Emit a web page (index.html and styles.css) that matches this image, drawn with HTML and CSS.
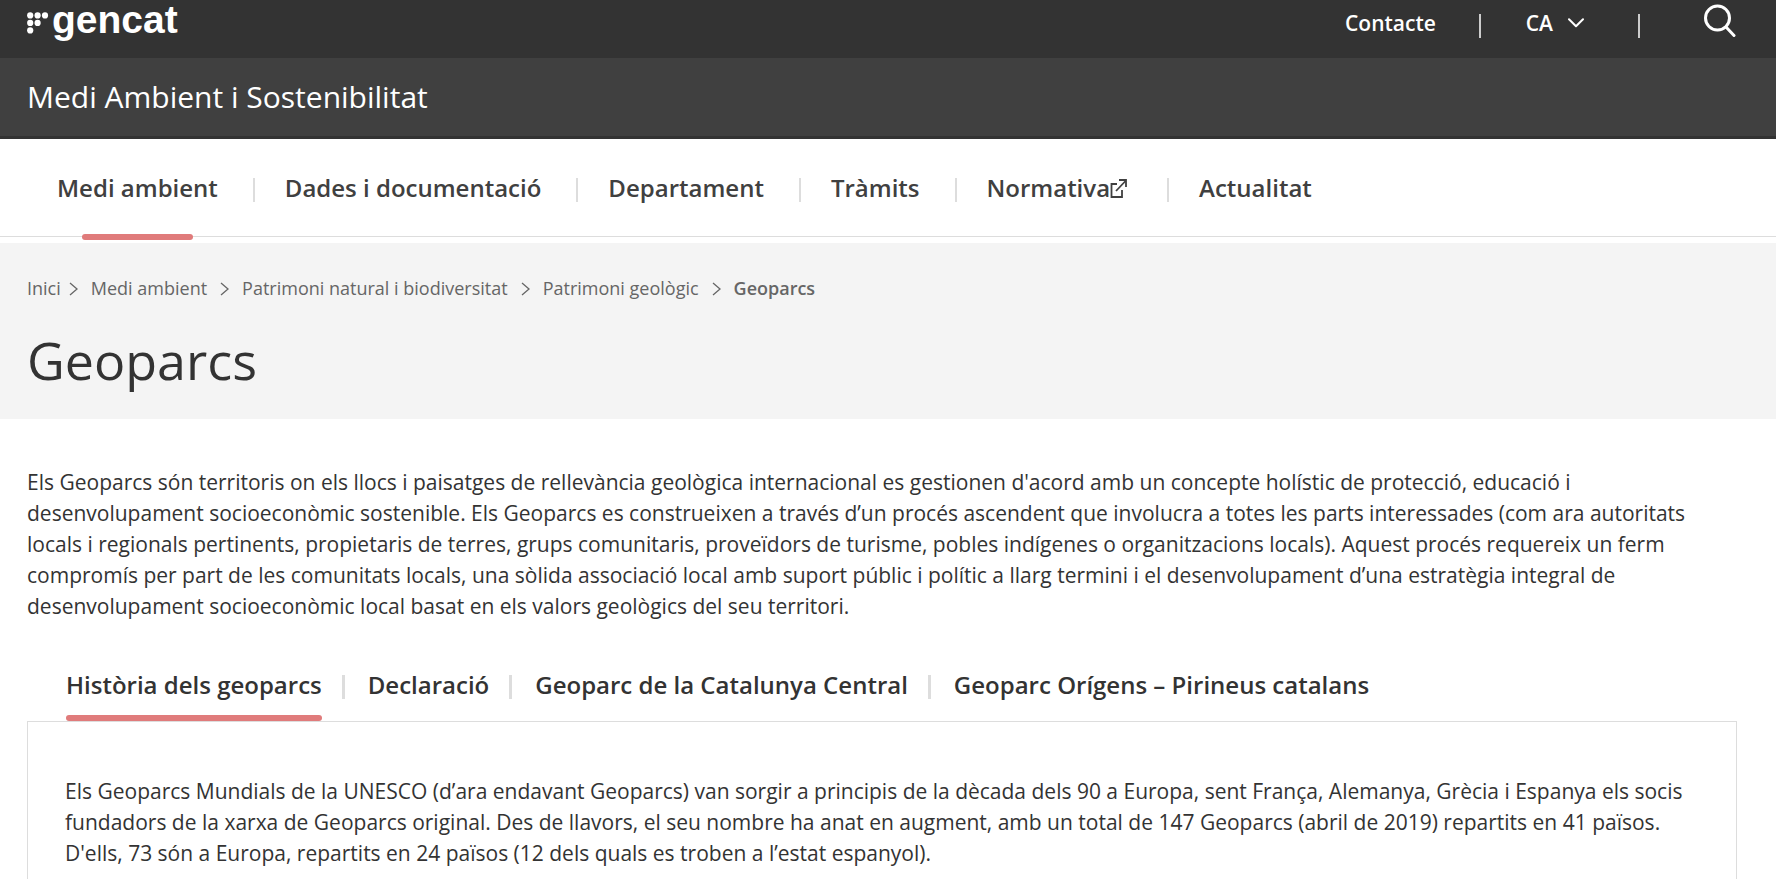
FILE: index.html
```html
<!DOCTYPE html>
<html lang="ca">
<head>
    <meta charset="UTF-8">
    <meta name="viewport" content="width=device-width, initial-scale=1.0">
    <title>Geoparcs. Medi Ambient i Sostenibilitat</title>
    <link rel="stylesheet" href="styles.css">
</head>
<body>
    <!-- header -->
    <header>
        <div class="topbar">
            <a class="logo" href="#">
                <svg width="22" height="22" viewBox="0 0 22 22" fill="#fff" aria-hidden="true">
                    <circle cx="3.2" cy="3.4" r="3.1"/>
                    <circle cx="10.6" cy="3.4" r="3.1"/>
                    <circle cx="18" cy="3.4" r="3.1"/>
                    <circle cx="3.2" cy="10.9" r="3.1"/>
                    <circle cx="10.6" cy="10.9" r="3.1"/>
                    <circle cx="3.2" cy="18.4" r="3.1"/>
                </svg>
                <span>gencat</span>
            </a>
            <div class="tools">
                <a class="contact" href="#">Contacte</a>
                <button class="lang" type="button">CA
                    <svg width="16" height="10" viewBox="0 0 16 10" fill="none" stroke="#fff" stroke-width="2" stroke-linecap="round" stroke-linejoin="round" aria-hidden="true">
                        <path d="M1 1.2 L8 8.3 L15 1.2"/>
                    </svg>
                </button>
                <button class="search" type="button" aria-label="Cerca">
                    <svg width="32" height="38" viewBox="0 0 32 38" fill="none" stroke="#fff" stroke-width="3" stroke-linecap="round" aria-hidden="true">
                        <circle cx="13.5" cy="14" r="12"/>
                        <path d="M22 23 L30 31.5"/>
                    </svg>
                </button>
            </div>
        </div>
        <div class="department">
            <a href="#">Medi Ambient i Sostenibilitat</a>
        </div>
    </header>

    <!-- main menu -->
    <nav class="menu">
        <a class="active" href="#">Medi ambient</a>
        <a href="#">Dades i documentació</a>
        <a href="#">Departament</a>
        <a href="#">Tràmits</a>
        <a class="external" href="#">Normativa<svg width="17" height="19" viewBox="0 0 17 19" fill="none" stroke="#404040" stroke-width="1.8" aria-hidden="true">
                <path d="M7 5 H1.5 V18 H12 V11"/>
                <path d="M6 12 L15.5 2"/>
                <path d="M9 1 H16 V8"/>
            </svg></a>
        <a href="#">Actualitat</a>
    </nav>

    <!-- page title -->
    <div class="page-head">
        <ol class="breadcrumb">
            <li><a href="#">Inici</a></li>
            <li><svg width="9" height="14" viewBox="0 0 9 14" aria-hidden="true"><path d="M1 1 L8 7 L1 13"/></svg><a href="#">Medi ambient</a></li>
            <li><svg width="9" height="14" viewBox="0 0 9 14" aria-hidden="true"><path d="M1 1 L8 7 L1 13"/></svg><a href="#">Patrimoni natural i biodiversitat</a></li>
            <li><svg width="9" height="14" viewBox="0 0 9 14" aria-hidden="true"><path d="M1 1 L8 7 L1 13"/></svg><a href="#">Patrimoni geològic</a></li>
            <li><svg width="9" height="14" viewBox="0 0 9 14" aria-hidden="true"><path d="M1 1 L8 7 L1 13"/></svg><strong>Geoparcs</strong></li>
        </ol>
        <h1>Geoparcs</h1>
    </div>

    <!-- content -->
    <main>
        <p class="intro">Els Geoparcs són territoris on els llocs i paisatges de rellevància geològica internacional es gestionen d'acord amb un concepte holístic de protecció, educació i desenvolupament socioeconòmic sostenible. Els Geoparcs es construeixen a través d’un procés ascendent que involucra a totes les parts interessades (com ara autoritats locals i regionals pertinents, propietaris de terres, grups comunitaris, proveïdors de turisme, pobles indígenes o organitzacions locals). Aquest procés requereix un ferm compromís per part de les comunitats locals, una sòlida associació local amb suport públic i polític a llarg termini i el desenvolupament d’una estratègia integral de desenvolupament socioeconòmic local basat en els valors geològics del seu territori.</p>

        <div class="tabs" role="tablist">
            <button class="active" type="button" role="tab" aria-selected="true">Història dels geoparcs</button>
            <button type="button" role="tab" aria-selected="false">Declaració</button>
            <button type="button" role="tab" aria-selected="false">Geoparc de la Catalunya Central</button>
            <button type="button" role="tab" aria-selected="false">Geoparc Orígens – Pirineus catalans</button>
        </div>
        <div class="panel" role="tabpanel">
            <p>Els Geoparcs Mundials de la UNESCO (d’ara endavant Geoparcs) van sorgir a principis de la dècada dels 90 a Europa, sent França, Alemanya, Grècia i Espanya els socis fundadors de la xarxa de Geoparcs original. Des de llavors, el seu nombre ha anat en augment, amb un total de 147 Geoparcs (abril de 2019) repartits en 41 països. D'ells, 73 són a Europa, repartits en 24 països (12 dels quals es troben a l’estat espanyol).</p>
        </div>
    </main>
</body>
</html>
```
FILE: styles.css
```css
* {
    box-sizing: border-box;
}
body {
    font-family: "Open Sans", sans-serif;
    font-size: 21px;
    line-height: 31px;
    color: #333;
    background: #fff;
    margin: 0;
}
a {
    color: inherit;
    text-decoration: none;
}
button {
    font-family: inherit;
    color: inherit;
    background: none;
    border: none;
    padding: 0;
    cursor: pointer;
}

/* header */
.topbar {
    display: flex;
    justify-content: space-between;
    height: 58px;
    padding: 0 40px 0 27px;
    background: #333;
    color: #fff;
}
.logo {
    display: flex;
    align-items: center;
    gap: 3px;
    height: 45px;
    font-family: "Liberation Sans", Arial, sans-serif;
    font-size: 39px;
    font-weight: bold;
    line-height: 38px;
}
.logo span {
    padding-bottom: 6px;
}
.tools {
    display: flex;
    align-items: center;
    height: 46px;
    font-weight: 600;
}
.lang, .search {
    display: flex;
    align-items: center;
}
.lang {
    gap: 15px;
    font-size: 21px;
    font-weight: 600;
}
.lang::before, .search::before {
    content: "";
    width: 2px;
    height: 24px;
    background: #ccc;
}
.lang::before {
    margin: 6px 30px 0 43px;
}
.search::before {
    margin: 6px 64px 0 54px;
}
.department {
    padding: 18px 27px;
    background: #404040;
    border-bottom: 3px solid #333;
    color: #fff;
    font-size: 30px;
    line-height: 42px;
}

/* main menu */
.menu {
    display: flex;
    padding: 0 57px;
    border-bottom: 1px solid #ddd;
    margin-bottom: 6px;
    color: #404040;
    font-size: 24px;
    font-weight: 600;
    line-height: 32px;
}
.menu a {
    position: relative;
    display: flex;
    align-items: center;
    padding: 33px 0 32px;
}
.menu a + a::before {
    content: "";
    width: 2px;
    height: 24px;
    margin: 4px 30px 0 35px;
    background: #ddd;
}
.menu .external {
    padding-right: 5px;
}
.menu .active::after {
    content: "";
    position: absolute;
    left: 25px;
    right: 25px;
    bottom: -4px;
    height: 6px;
    border-radius: 3px;
    background: #e07b7b;
}

/* page title */
.page-head {
    padding: 30px 27px 23px;
    background: #f4f4f4;
}
.breadcrumb {
    display: flex;
    flex-wrap: wrap;
    list-style: none;
    margin: 0;
    padding: 0;
    color: #666;
    font-size: 18px;
}
.breadcrumb li {
    display: flex;
    align-items: center;
}
.breadcrumb svg {
    margin: 0 13px;
    fill: none;
    stroke: #666;
    stroke-width: 1.3;
}
.breadcrumb li:nth-child(2) svg {
    margin-left: 8px;
}
.breadcrumb strong {
    font-weight: 600;
}
h1 {
    margin: 20px 0 0;
    font-size: 52px;
    font-weight: 400;
    line-height: 72px;
}

/* content */
main {
    padding: 48px 39px 0 27px;
}
.intro {
    margin: 0 20px 0 0;
}
.tabs {
    display: flex;
    flex-wrap: wrap;
    padding: 0 39px;
    margin-top: 35px;
}
.tabs button {
    position: relative;
    display: flex;
    align-items: center;
    padding: 12px 0 20px;
    font-size: 24px;
    font-weight: 600;
    line-height: 32px;
}
.tabs button + button::before {
    content: "";
    width: 3px;
    height: 24px;
    margin: 4px 23px 0 20px;
    background: #ddd;
}
.tabs .active::after {
    content: "";
    position: absolute;
    left: 0;
    right: 0;
    bottom: 0;
    height: 6px;
    border-radius: 3px;
    background: #e07b7b;
}
.panel {
    padding: 54px 48px 40px 37px;
    border: 1px solid #ddd;
}
.panel p {
    margin: 0;
}
```
